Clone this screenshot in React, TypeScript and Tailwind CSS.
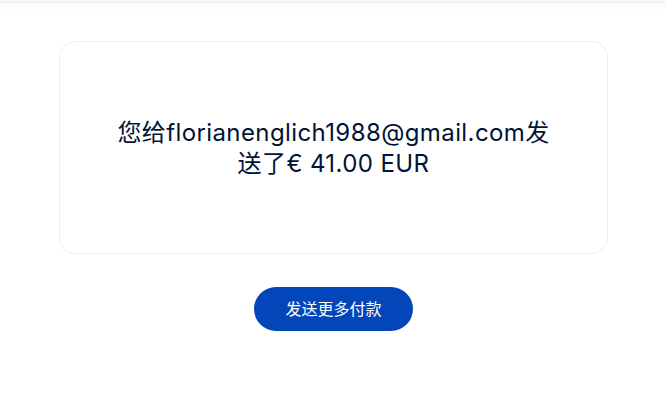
export default function App() {
  return (
    <div className="min-h-screen bg-white" style={{ fontFamily: 'Inter, "Noto Sans CJK SC", sans-serif' }}>
      <div className="h-[3px] bg-[#f7f7f7] border-b border-[#ebebeb] shadow-[0_2px_6px_rgba(0,0,0,0.06)]" />

      <div className="pl-[59px] pr-[57px] pt-[38px]">
        <div className="h-[213px] rounded-[16px] border border-[#eeeeee] flex items-center justify-center px-10">
          <p className="text-center text-[24px] leading-[31px] tracking-[0.4px] text-[#001435] max-w-[446px]">
            您给florianenglich1988@gmail.com发送了€ 41.00 EUR
          </p>
        </div>

        <div className="flex justify-center mt-[33px]">
          <button className="h-[44px] px-[31px] rounded-full bg-[#0346b9] text-white text-[16px]">
            发送更多付款
          </button>
        </div>
      </div>
    </div>
  )
}
